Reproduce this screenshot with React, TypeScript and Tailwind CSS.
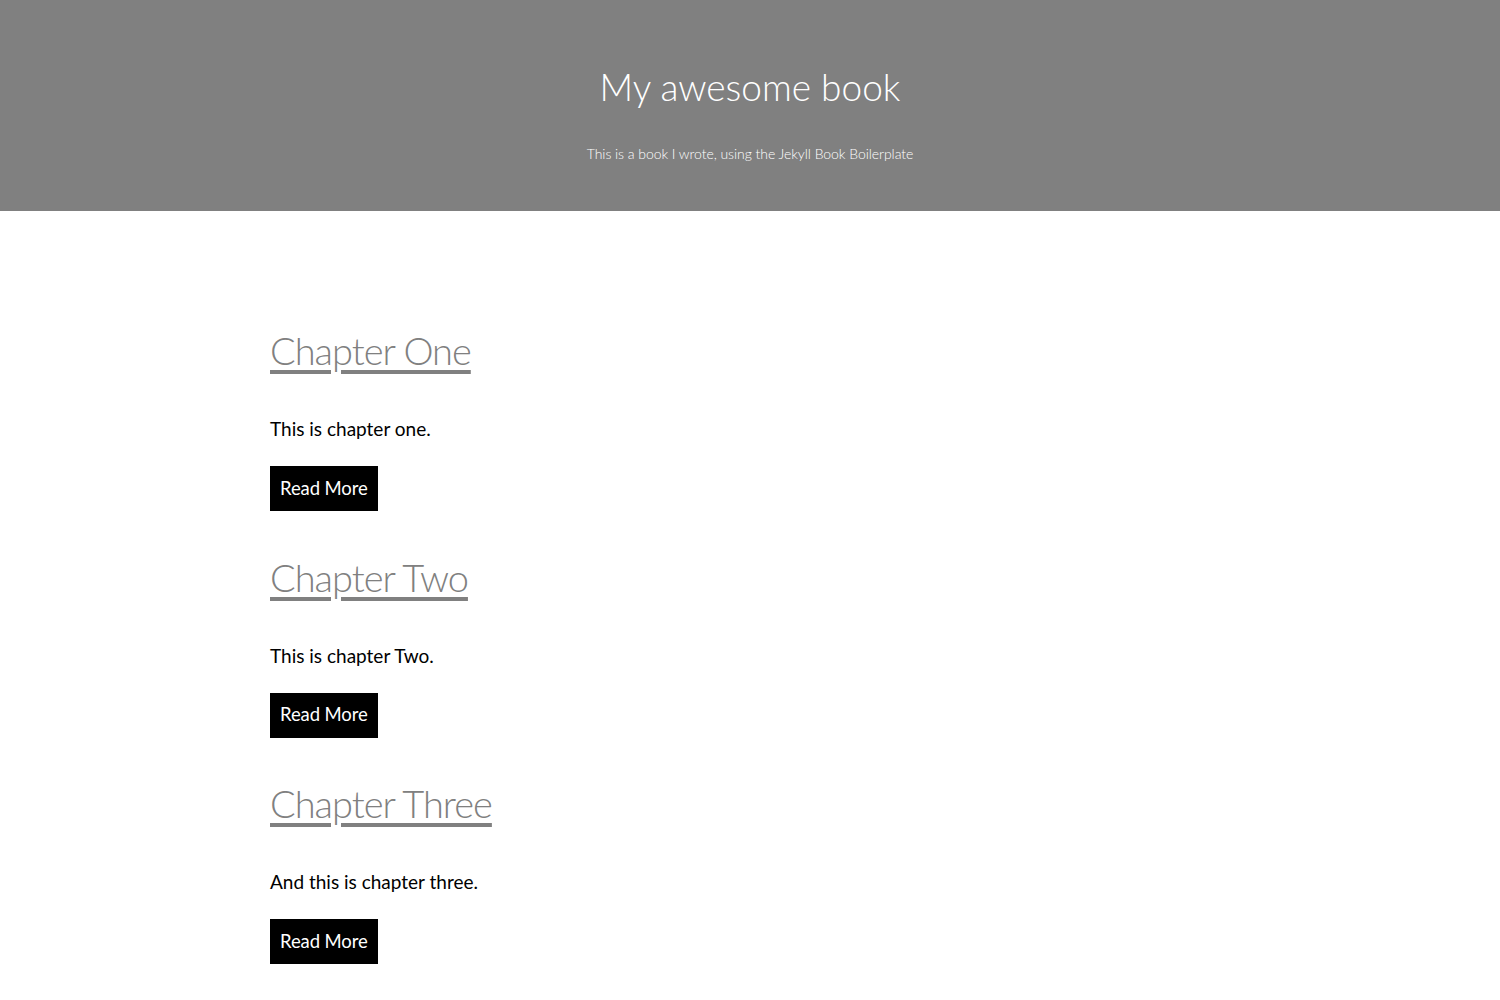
import React from "react"

const chapters = [
  { title: "Chapter One", excerpt: "This is chapter one." },
  { title: "Chapter Two", excerpt: "This is chapter Two." },
  { title: "Chapter Three", excerpt: "And this is chapter three." },
]

export default function App() {
  return (
    <div className="min-h-screen bg-white font-['Lato',sans-serif]">
      {/* header */}
      <header className="h-[211px] bg-[#808080] text-white flex flex-col items-center">
        <h1 className="mt-[61px] text-[37px] leading-[52px] font-light">My awesome book</h1>
        <p className="mt-[31px] text-[14px] leading-[20px] font-light tracking-[-0.05px]">
          This is a book I wrote, using the Jekyll Book Boilerplate
        </p>
      </header>

      {/* chapters */}
      <main className="mx-auto w-[960px] pt-[114px]">
        {chapters.map((chapter, idx) => (
          <section key={`chapter_${idx}`} className="h-[226.5px]">
            <h2 className="text-[38px] leading-[50px] font-light tracking-[-1px]">
              <a
                href="#"
                className="text-[#808080] underline decoration-[4px] underline-offset-[5px]"
              >
                {chapter.title}
              </a>
            </h2>
            <p className="mt-[42px] text-[19px] leading-[24px] text-black">{chapter.excerpt}</p>
            <button className="mt-[25px] h-[45px] px-[10px] bg-black text-white text-[18.5px] tracking-[-0.1px]">
              Read More
            </button>
          </section>
        ))}
      </main>
    </div>
  )
}
